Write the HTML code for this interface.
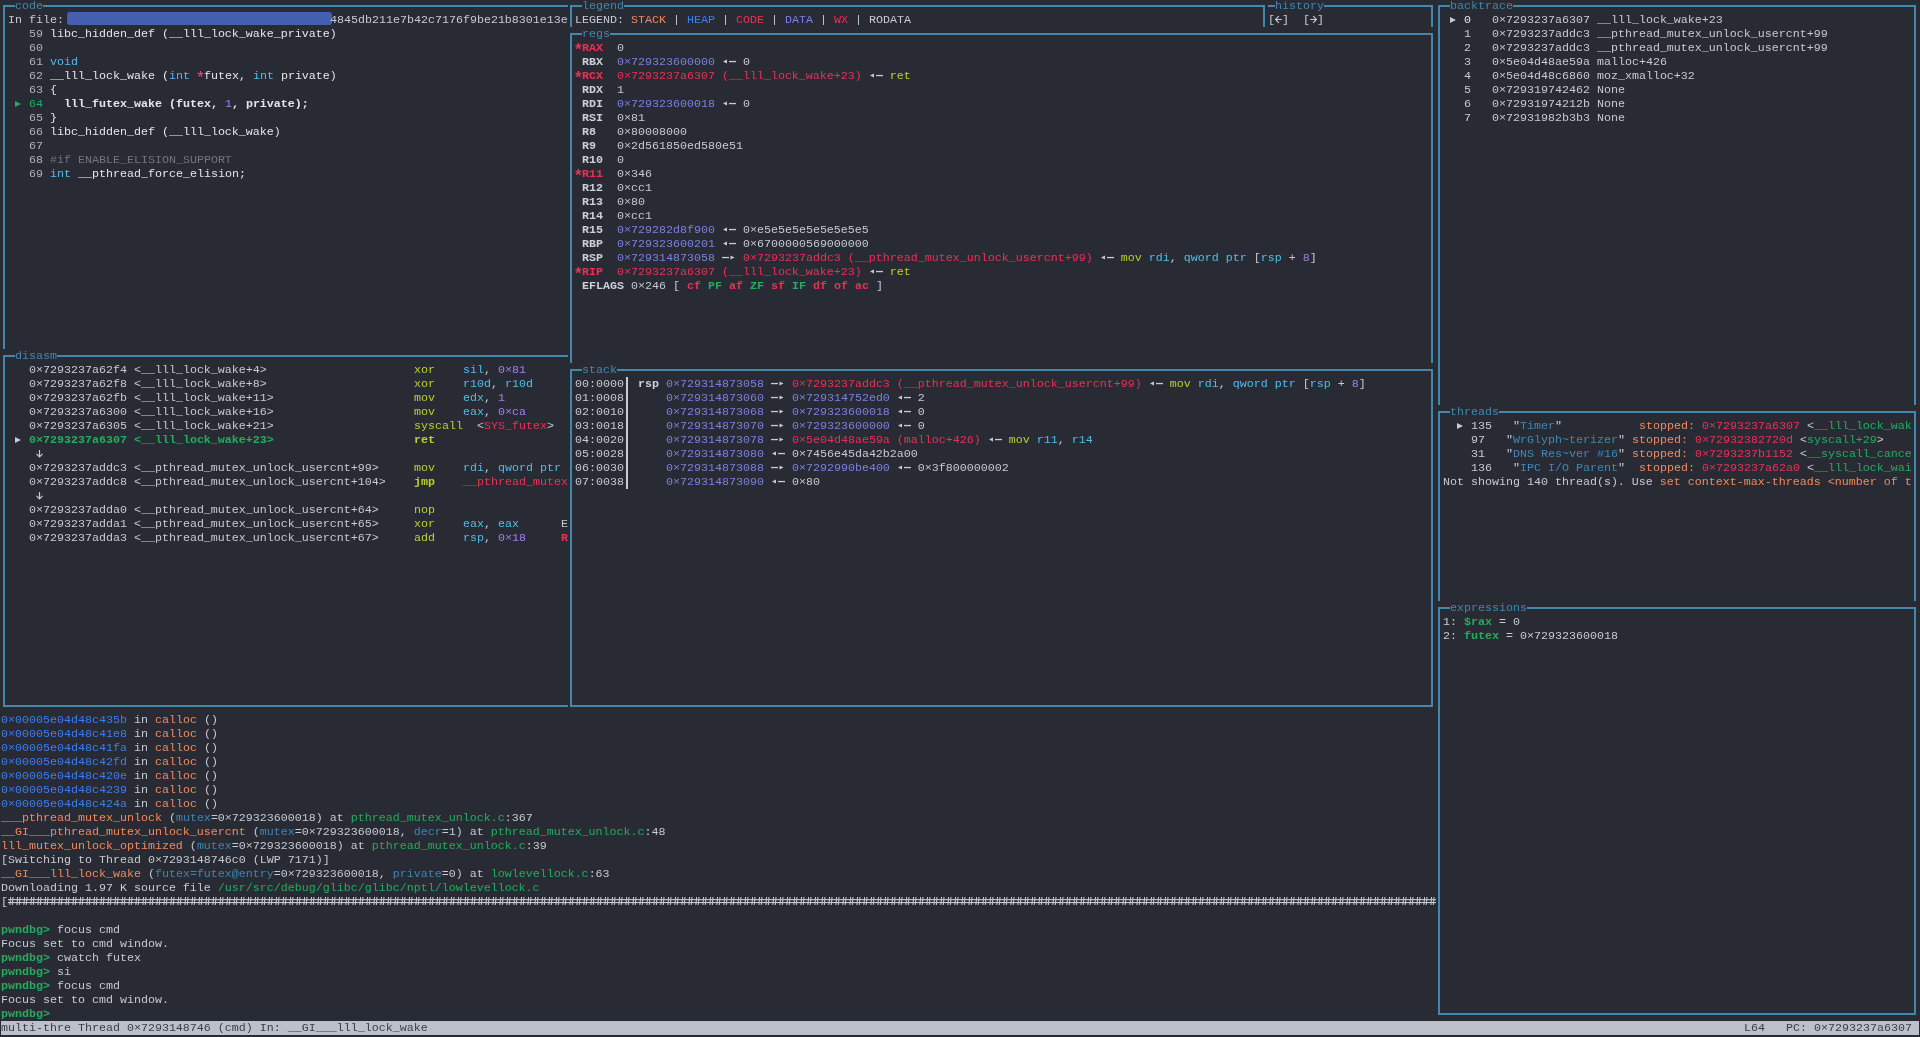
<!DOCTYPE html>
<html><head><meta charset="utf-8"><style>
html,body{margin:0;padding:0;}
body{width:1920px;height:1037px;overflow:hidden;background:#282b34;position:relative;
font-family:"Liberation Mono",monospace;font-size:11.667px;}
.l{position:absolute;height:14px;line-height:14px;white-space:pre;}
.ast{display:inline-block;transform:translateY(3px) scale(1.4);}
</style></head><body>
<div style="position:absolute;left:3px;top:5px;width:565px;height:2px;background:#4386ae;"></div>
<div style="position:absolute;left:15px;top:5px;width:28px;height:2px;background:#282b34;"></div>
<div style="position:absolute;left:3px;top:5px;width:2px;height:344px;background:#4386ae;"></div>
<div style="position:absolute;left:3px;top:355px;width:565px;height:2px;background:#4386ae;"></div>
<div style="position:absolute;left:15px;top:355px;width:42px;height:2px;background:#282b34;"></div>
<div style="position:absolute;left:3px;top:355px;width:2px;height:352px;background:#4386ae;"></div>
<div style="position:absolute;left:3px;top:705px;width:565px;height:2px;background:#4386ae;"></div>
<div style="position:absolute;left:570px;top:5px;width:695px;height:2px;background:#4386ae;"></div>
<div style="position:absolute;left:582px;top:5px;width:42px;height:2px;background:#282b34;"></div>
<div style="position:absolute;left:570px;top:5px;width:2px;height:22px;background:#4386ae;"></div>
<div style="position:absolute;left:1263px;top:5px;width:2px;height:22px;background:#4386ae;"></div>
<div style="position:absolute;left:1268px;top:5px;width:165px;height:2px;background:#4386ae;"></div>
<div style="position:absolute;left:1431px;top:5px;width:2px;height:22px;background:#4386ae;"></div>
<div style="position:absolute;left:1275px;top:5px;width:49px;height:2px;background:#282b34;"></div>
<div style="position:absolute;left:570px;top:33px;width:863px;height:2px;background:#4386ae;"></div>
<div style="position:absolute;left:582px;top:33px;width:28px;height:2px;background:#282b34;"></div>
<div style="position:absolute;left:570px;top:33px;width:2px;height:330px;background:#4386ae;"></div>
<div style="position:absolute;left:1431px;top:33px;width:2px;height:330px;background:#4386ae;"></div>
<div style="position:absolute;left:570px;top:369px;width:863px;height:2px;background:#4386ae;"></div>
<div style="position:absolute;left:582px;top:369px;width:35px;height:2px;background:#282b34;"></div>
<div style="position:absolute;left:570px;top:369px;width:2px;height:338px;background:#4386ae;"></div>
<div style="position:absolute;left:1431px;top:369px;width:2px;height:338px;background:#4386ae;"></div>
<div style="position:absolute;left:570px;top:705px;width:863px;height:2px;background:#4386ae;"></div>
<div style="position:absolute;left:1438px;top:5px;width:478px;height:2px;background:#4386ae;"></div>
<div style="position:absolute;left:1450px;top:5px;width:63px;height:2px;background:#282b34;"></div>
<div style="position:absolute;left:1438px;top:5px;width:2px;height:400px;background:#4386ae;"></div>
<div style="position:absolute;left:1914px;top:5px;width:2px;height:400px;background:#4386ae;"></div>
<div style="position:absolute;left:1438px;top:411px;width:478px;height:2px;background:#4386ae;"></div>
<div style="position:absolute;left:1450px;top:411px;width:49px;height:2px;background:#282b34;"></div>
<div style="position:absolute;left:1438px;top:411px;width:2px;height:190px;background:#4386ae;"></div>
<div style="position:absolute;left:1914px;top:411px;width:2px;height:190px;background:#4386ae;"></div>
<div style="position:absolute;left:1438px;top:607px;width:478px;height:2px;background:#4386ae;"></div>
<div style="position:absolute;left:1450px;top:607px;width:77px;height:2px;background:#282b34;"></div>
<div style="position:absolute;left:1438px;top:607px;width:2px;height:408px;background:#4386ae;"></div>
<div style="position:absolute;left:1914px;top:607px;width:2px;height:408px;background:#4386ae;"></div>
<div style="position:absolute;left:1438px;top:1013px;width:478px;height:2px;background:#4386ae;"></div>
<div style="position:absolute;left:67px;top:12px;width:265px;height:13px;background:#4560b0;border-radius:3px"></div>
<div style="position:absolute;left:626px;top:377px;width:2px;height:14px;background:#c8ccd4;"></div>
<div style="position:absolute;left:626px;top:391px;width:2px;height:14px;background:#c8ccd4;"></div>
<div style="position:absolute;left:626px;top:405px;width:2px;height:14px;background:#c8ccd4;"></div>
<div style="position:absolute;left:626px;top:419px;width:2px;height:14px;background:#c8ccd4;"></div>
<div style="position:absolute;left:626px;top:433px;width:2px;height:14px;background:#c8ccd4;"></div>
<div style="position:absolute;left:626px;top:447px;width:2px;height:14px;background:#c8ccd4;"></div>
<div style="position:absolute;left:626px;top:461px;width:2px;height:14px;background:#c8ccd4;"></div>
<div style="position:absolute;left:626px;top:475px;width:2px;height:14px;background:#c8ccd4;"></div>
<div style="position:absolute;left:1px;top:1021px;width:1918px;height:14px;background:#bac1cd;"></div>
<div style="position:absolute;left:0;top:0;width:1920px;height:1037px;will-change:transform"><div class="l" style="left:15px;top:-1px"><span style="color:#4386ae">code</span></div>
<div class="l" style="left:15px;top:349px"><span style="color:#4386ae">disasm</span></div>
<div class="l" style="left:582px;top:-1px"><span style="color:#4386ae">legend</span></div>
<div class="l" style="left:1275px;top:-1px"><span style="color:#4386ae">history</span></div>
<div class="l" style="left:582px;top:27px"><span style="color:#4386ae">regs</span></div>
<div class="l" style="left:582px;top:363px"><span style="color:#4386ae">stack</span></div>
<div class="l" style="left:1450px;top:-1px"><span style="color:#4386ae">backtrace</span></div>
<div class="l" style="left:1450px;top:405px"><span style="color:#4386ae">threads</span></div>
<div class="l" style="left:1450px;top:601px"><span style="color:#4386ae">expressions</span></div>
<div class="l" style="left:8px;top:13px"><span style="color:#c6cad2">In file: </span></div>
<div class="l" style="left:330px;top:13px"><span style="color:#c6cad2">4845db211e7b42c7176f9be21b8301e13e</span></div>
<div class="l" style="left:29px;top:27px"><span style="color:#b0b4bb">59 </span><span style="color:#e4e6ea">libc_hidden_def (__lll_lock_wake_private)</span></div>
<div class="l" style="left:29px;top:41px"><span style="color:#b0b4bb">60 </span></div>
<div class="l" style="left:29px;top:55px"><span style="color:#b0b4bb">61 </span><span style="color:#50bdea">void</span></div>
<div class="l" style="left:29px;top:69px"><span style="color:#b0b4bb">62 </span><span style="color:#e4e6ea">__lll_lock_wake (</span><span style="color:#50bdea">int</span><span style="color:#e4e6ea"> </span><span style="color:#ee4f7e"><span class="ast">*</span></span><span style="color:#e4e6ea">futex, </span><span style="color:#50bdea">int</span><span style="color:#e4e6ea"> private)</span></div>
<div class="l" style="left:29px;top:83px"><span style="color:#b0b4bb">63 </span><span style="color:#e4e6ea">{</span></div>
<div class="l" style="left:29px;top:111px"><span style="color:#b0b4bb">65 </span><span style="color:#e4e6ea">}</span></div>
<div class="l" style="left:29px;top:125px"><span style="color:#b0b4bb">66 </span><span style="color:#e4e6ea">libc_hidden_def (__lll_lock_wake)</span></div>
<div class="l" style="left:29px;top:139px"><span style="color:#b0b4bb">67 </span></div>
<div class="l" style="left:29px;top:153px"><span style="color:#b0b4bb">68 </span><span style="color:#71757e">#if ENABLE_ELISION_SUPPORT</span></div>
<div class="l" style="left:29px;top:167px"><span style="color:#b0b4bb">69 </span><span style="color:#50bdea">int</span><span style="color:#e4e6ea"> __pthread_force_elision;</span></div>
<div class="l" style="left:15px;top:97px"><span style="color:#23ad5c"> </span><span style="color:#c6cad2"> </span><span style="color:#23ad5c">64</span><span style="color:#c6cad2">   </span><span style="color:#e4e6ea;font-weight:bold">lll_futex_wake (futex, </span><span style="color:#a77df0">1</span><span style="color:#e4e6ea;font-weight:bold">, private);</span></div>
<div class="l" style="left:29px;top:363px"><span style="color:#c6cad2">0×7293237a62f4 &lt;__lll_lock_wake+4&gt;</span></div>
<div class="l" style="left:414px;top:363px"><span style="color:#bccf2c">xor</span></div>
<div class="l" style="left:463px;top:363px"><span style="color:#50bdea">sil</span><span style="color:#c6cad2">, </span><span style="color:#a77df0">0×81</span></div>
<div class="l" style="left:29px;top:377px"><span style="color:#c6cad2">0×7293237a62f8 &lt;__lll_lock_wake+8&gt;</span></div>
<div class="l" style="left:414px;top:377px"><span style="color:#bccf2c">xor</span></div>
<div class="l" style="left:463px;top:377px"><span style="color:#50bdea">r10d</span><span style="color:#c6cad2">, </span><span style="color:#50bdea">r10d</span></div>
<div class="l" style="left:29px;top:391px"><span style="color:#c6cad2">0×7293237a62fb &lt;__lll_lock_wake+11&gt;</span></div>
<div class="l" style="left:414px;top:391px"><span style="color:#bccf2c">mov</span></div>
<div class="l" style="left:463px;top:391px"><span style="color:#50bdea">edx</span><span style="color:#c6cad2">, </span><span style="color:#a77df0">1</span></div>
<div class="l" style="left:29px;top:405px"><span style="color:#c6cad2">0×7293237a6300 &lt;__lll_lock_wake+16&gt;</span></div>
<div class="l" style="left:414px;top:405px"><span style="color:#bccf2c">mov</span></div>
<div class="l" style="left:463px;top:405px"><span style="color:#50bdea">eax</span><span style="color:#c6cad2">, </span><span style="color:#a77df0">0×ca</span></div>
<div class="l" style="left:29px;top:419px"><span style="color:#c6cad2">0×7293237a6305 &lt;__lll_lock_wake+21&gt;</span></div>
<div class="l" style="left:414px;top:419px"><span style="color:#bccf2c">syscall</span></div>
<div class="l" style="left:477px;top:419px"><span style="color:#c6cad2">&lt;</span><span style="color:#ee2f55">SYS_futex</span><span style="color:#c6cad2">&gt;</span></div>
<div class="l" style="left:15px;top:433px"><span style="color:#c6cad2"> </span></div>
<div class="l" style="left:29px;top:433px"><span style="color:#23ad5c;font-weight:bold">0×7293237a6307 &lt;__lll_lock_wake+23&gt;</span></div>
<div class="l" style="left:414px;top:433px"><span style="color:#bccf2c;font-weight:bold">ret</span></div>
<div class="l" style="left:36px;top:447px"><span style="color:#c6cad2"> </span></div>
<div class="l" style="left:29px;top:461px"><span style="color:#c6cad2">0×7293237addc3 &lt;__pthread_mutex_unlock_usercnt+99&gt;</span></div>
<div class="l" style="left:414px;top:461px"><span style="color:#bccf2c">mov</span></div>
<div class="l" style="left:463px;top:461px"><span style="color:#50bdea">rdi</span><span style="color:#c6cad2">, </span><span style="color:#50bdea">qword ptr</span></div>
<div class="l" style="left:29px;top:475px"><span style="color:#c6cad2">0×7293237addc8 &lt;__pthread_mutex_unlock_usercnt+104&gt;</span></div>
<div class="l" style="left:414px;top:475px"><span style="color:#bccf2c;font-weight:bold">jmp</span></div>
<div class="l" style="left:463px;top:475px"><span style="color:#ee2f55">__pthread_mutex</span></div>
<div class="l" style="left:36px;top:489px"><span style="color:#c6cad2"> </span></div>
<div class="l" style="left:29px;top:503px"><span style="color:#c6cad2">0×7293237adda0 &lt;__pthread_mutex_unlock_usercnt+64&gt;</span></div>
<div class="l" style="left:414px;top:503px"><span style="color:#bccf2c">nop</span></div>
<div class="l" style="left:29px;top:517px"><span style="color:#c6cad2">0×7293237adda1 &lt;__pthread_mutex_unlock_usercnt+65&gt;</span></div>
<div class="l" style="left:414px;top:517px"><span style="color:#bccf2c">xor</span></div>
<div class="l" style="left:463px;top:517px"><span style="color:#50bdea">eax</span><span style="color:#c6cad2">, </span><span style="color:#50bdea">eax</span></div>
<div class="l" style="left:561px;top:517px"><span style="color:#c6cad2">E</span></div>
<div class="l" style="left:29px;top:531px"><span style="color:#c6cad2">0×7293237adda3 &lt;__pthread_mutex_unlock_usercnt+67&gt;</span></div>
<div class="l" style="left:414px;top:531px"><span style="color:#bccf2c">add</span></div>
<div class="l" style="left:463px;top:531px"><span style="color:#50bdea">rsp</span><span style="color:#c6cad2">, </span><span style="color:#a77df0">0×18</span></div>
<div class="l" style="left:561px;top:531px"><span style="color:#ee2f55;font-weight:bold">R</span></div>
<div class="l" style="left:575px;top:13px"><span style="color:#c6cad2">LEGEND: </span><span style="color:#f08a5d">STACK</span><span style="color:#c6cad2"> | </span><span style="color:#3a7ef2">HEAP</span><span style="color:#c6cad2"> | </span><span style="color:#ee2f55">CODE</span><span style="color:#c6cad2"> | </span><span style="color:#7c80e0">DATA</span><span style="color:#c6cad2"> | </span><span style="color:#ee2f55">WX</span><span style="color:#c6cad2"> | </span><span style="color:#c6cad2">RODATA</span></div>
<div class="l" style="left:1268px;top:13px"><span style="color:#c6cad2">[ ]  [ ]</span></div>
<div class="l" style="left:575px;top:41px"><span style="color:#ee2f55;font-weight:bold"><span class="ast">*</span>RAX</span></div>
<div class="l" style="left:617px;top:41px"><span style="color:#c6cad2">0</span></div>
<div class="l" style="left:582px;top:55px"><span style="color:#ccd0d8;font-weight:bold">RBX</span></div>
<div class="l" style="left:617px;top:55px"><span style="color:#7c80e0">0×729323600000</span><span style="color:#c6cad2"> </span><span style="color:#c6cad2">  </span><span style="color:#c6cad2"> 0</span></div>
<div class="l" style="left:575px;top:69px"><span style="color:#ee2f55;font-weight:bold"><span class="ast">*</span>RCX</span></div>
<div class="l" style="left:617px;top:69px"><span style="color:#ee2f55">0×7293237a6307 (__lll_lock_wake+23)</span><span style="color:#c6cad2"> </span><span style="color:#c6cad2">  </span><span style="color:#c6cad2"> </span><span style="color:#bccf2c">ret</span></div>
<div class="l" style="left:582px;top:83px"><span style="color:#ccd0d8;font-weight:bold">RDX</span></div>
<div class="l" style="left:617px;top:83px"><span style="color:#c6cad2">1</span></div>
<div class="l" style="left:582px;top:97px"><span style="color:#ccd0d8;font-weight:bold">RDI</span></div>
<div class="l" style="left:617px;top:97px"><span style="color:#7c80e0">0×729323600018</span><span style="color:#c6cad2"> </span><span style="color:#c6cad2">  </span><span style="color:#c6cad2"> 0</span></div>
<div class="l" style="left:582px;top:111px"><span style="color:#ccd0d8;font-weight:bold">RSI</span></div>
<div class="l" style="left:617px;top:111px"><span style="color:#c6cad2">0×81</span></div>
<div class="l" style="left:582px;top:125px"><span style="color:#ccd0d8;font-weight:bold">R8</span></div>
<div class="l" style="left:617px;top:125px"><span style="color:#c6cad2">0×80008000</span></div>
<div class="l" style="left:582px;top:139px"><span style="color:#ccd0d8;font-weight:bold">R9</span></div>
<div class="l" style="left:617px;top:139px"><span style="color:#c6cad2">0×2d561850ed580e51</span></div>
<div class="l" style="left:582px;top:153px"><span style="color:#ccd0d8;font-weight:bold">R10</span></div>
<div class="l" style="left:617px;top:153px"><span style="color:#c6cad2">0</span></div>
<div class="l" style="left:575px;top:167px"><span style="color:#ee2f55;font-weight:bold"><span class="ast">*</span>R11</span></div>
<div class="l" style="left:617px;top:167px"><span style="color:#c6cad2">0×346</span></div>
<div class="l" style="left:582px;top:181px"><span style="color:#ccd0d8;font-weight:bold">R12</span></div>
<div class="l" style="left:617px;top:181px"><span style="color:#c6cad2">0×cc1</span></div>
<div class="l" style="left:582px;top:195px"><span style="color:#ccd0d8;font-weight:bold">R13</span></div>
<div class="l" style="left:617px;top:195px"><span style="color:#c6cad2">0×80</span></div>
<div class="l" style="left:582px;top:209px"><span style="color:#ccd0d8;font-weight:bold">R14</span></div>
<div class="l" style="left:617px;top:209px"><span style="color:#c6cad2">0×cc1</span></div>
<div class="l" style="left:582px;top:223px"><span style="color:#ccd0d8;font-weight:bold">R15</span></div>
<div class="l" style="left:617px;top:223px"><span style="color:#7c80e0">0×729282d8f900</span><span style="color:#c6cad2"> </span><span style="color:#c6cad2">  </span><span style="color:#c6cad2"> 0×e5e5e5e5e5e5e5e5</span></div>
<div class="l" style="left:582px;top:237px"><span style="color:#ccd0d8;font-weight:bold">RBP</span></div>
<div class="l" style="left:617px;top:237px"><span style="color:#7c80e0">0×729323600201</span><span style="color:#c6cad2"> </span><span style="color:#c6cad2">  </span><span style="color:#c6cad2"> 0×6700000569000000</span></div>
<div class="l" style="left:582px;top:251px"><span style="color:#ccd0d8;font-weight:bold">RSP</span></div>
<div class="l" style="left:617px;top:251px"><span style="color:#7c80e0">0×729314873058</span><span style="color:#c6cad2"> </span><span style="color:#c6cad2">  </span><span style="color:#c6cad2"> </span><span style="color:#ee2f55">0×7293237addc3 (__pthread_mutex_unlock_usercnt+99)</span><span style="color:#c6cad2"> </span><span style="color:#c6cad2">  </span><span style="color:#c6cad2"> </span><span style="color:#bccf2c">mov</span><span style="color:#c6cad2"> </span><span style="color:#50bdea">rdi</span><span style="color:#c6cad2">, </span><span style="color:#50bdea">qword ptr</span><span style="color:#c6cad2"> [</span><span style="color:#50bdea">rsp</span><span style="color:#c6cad2"> + </span><span style="color:#a77df0">8</span><span style="color:#c6cad2">]</span></div>
<div class="l" style="left:575px;top:265px"><span style="color:#ee2f55;font-weight:bold"><span class="ast">*</span>RIP</span></div>
<div class="l" style="left:617px;top:265px"><span style="color:#ee2f55">0×7293237a6307 (__lll_lock_wake+23)</span><span style="color:#c6cad2"> </span><span style="color:#c6cad2">  </span><span style="color:#c6cad2"> </span><span style="color:#bccf2c">ret</span></div>
<div class="l" style="left:582px;top:279px"><span style="color:#ccd0d8;font-weight:bold">EFLAGS</span><span style="color:#c6cad2"> 0×246 [ </span><span style="color:#ee2f55;font-weight:bold">cf</span><span style="color:#c6cad2"> </span><span style="color:#23ad5c;font-weight:bold">PF</span><span style="color:#c6cad2"> </span><span style="color:#ee2f55;font-weight:bold">af</span><span style="color:#c6cad2"> </span><span style="color:#23ad5c;font-weight:bold">ZF</span><span style="color:#c6cad2"> </span><span style="color:#ee2f55;font-weight:bold">sf</span><span style="color:#c6cad2"> </span><span style="color:#23ad5c;font-weight:bold">IF</span><span style="color:#c6cad2"> </span><span style="color:#ee2f55;font-weight:bold">df</span><span style="color:#c6cad2"> </span><span style="color:#ee2f55;font-weight:bold">of</span><span style="color:#c6cad2"> </span><span style="color:#ee2f55;font-weight:bold">ac</span><span style="color:#c6cad2"> ]</span></div>
<div class="l" style="left:575px;top:377px"><span style="color:#c6cad2">00:0000</span></div>
<div class="l" style="left:638px;top:377px"><span style="color:#ccd0d8;font-weight:bold">rsp</span></div>
<div class="l" style="left:666px;top:377px"><span style="color:#7c80e0">0×729314873058</span><span style="color:#c6cad2"> </span><span style="color:#c6cad2">  </span><span style="color:#c6cad2"> </span><span style="color:#ee2f55">0×7293237addc3 (__pthread_mutex_unlock_usercnt+99)</span><span style="color:#c6cad2"> </span><span style="color:#c6cad2">  </span><span style="color:#c6cad2"> </span><span style="color:#bccf2c">mov</span><span style="color:#c6cad2"> </span><span style="color:#50bdea">rdi</span><span style="color:#c6cad2">, </span><span style="color:#50bdea">qword ptr</span><span style="color:#c6cad2"> [</span><span style="color:#50bdea">rsp</span><span style="color:#c6cad2"> + </span><span style="color:#a77df0">8</span><span style="color:#c6cad2">]</span></div>
<div class="l" style="left:575px;top:391px"><span style="color:#c6cad2">01:0008</span></div>
<div class="l" style="left:666px;top:391px"><span style="color:#7c80e0">0×729314873060</span><span style="color:#c6cad2"> </span><span style="color:#c6cad2">  </span><span style="color:#c6cad2"> </span><span style="color:#7c80e0">0×729314752ed0</span><span style="color:#c6cad2"> </span><span style="color:#c6cad2">  </span><span style="color:#c6cad2"> 2</span></div>
<div class="l" style="left:575px;top:405px"><span style="color:#c6cad2">02:0010</span></div>
<div class="l" style="left:666px;top:405px"><span style="color:#7c80e0">0×729314873068</span><span style="color:#c6cad2"> </span><span style="color:#c6cad2">  </span><span style="color:#c6cad2"> </span><span style="color:#7c80e0">0×729323600018</span><span style="color:#c6cad2"> </span><span style="color:#c6cad2">  </span><span style="color:#c6cad2"> 0</span></div>
<div class="l" style="left:575px;top:419px"><span style="color:#c6cad2">03:0018</span></div>
<div class="l" style="left:666px;top:419px"><span style="color:#7c80e0">0×729314873070</span><span style="color:#c6cad2"> </span><span style="color:#c6cad2">  </span><span style="color:#c6cad2"> </span><span style="color:#7c80e0">0×729323600000</span><span style="color:#c6cad2"> </span><span style="color:#c6cad2">  </span><span style="color:#c6cad2"> 0</span></div>
<div class="l" style="left:575px;top:433px"><span style="color:#c6cad2">04:0020</span></div>
<div class="l" style="left:666px;top:433px"><span style="color:#7c80e0">0×729314873078</span><span style="color:#c6cad2"> </span><span style="color:#c6cad2">  </span><span style="color:#c6cad2"> </span><span style="color:#ee2f55">0×5e04d48ae59a (malloc+426)</span><span style="color:#c6cad2"> </span><span style="color:#c6cad2">  </span><span style="color:#c6cad2"> </span><span style="color:#bccf2c">mov</span><span style="color:#c6cad2"> </span><span style="color:#50bdea">r11</span><span style="color:#c6cad2">, </span><span style="color:#50bdea">r14</span></div>
<div class="l" style="left:575px;top:447px"><span style="color:#c6cad2">05:0028</span></div>
<div class="l" style="left:666px;top:447px"><span style="color:#7c80e0">0×729314873080</span><span style="color:#c6cad2"> </span><span style="color:#c6cad2">  </span><span style="color:#c6cad2"> 0×7456e45da42b2a00</span></div>
<div class="l" style="left:575px;top:461px"><span style="color:#c6cad2">06:0030</span></div>
<div class="l" style="left:666px;top:461px"><span style="color:#7c80e0">0×729314873088</span><span style="color:#c6cad2"> </span><span style="color:#c6cad2">  </span><span style="color:#c6cad2"> </span><span style="color:#7c80e0">0×7292990be400</span><span style="color:#c6cad2"> </span><span style="color:#c6cad2">  </span><span style="color:#c6cad2"> 0×3f800000002</span></div>
<div class="l" style="left:575px;top:475px"><span style="color:#c6cad2">07:0038</span></div>
<div class="l" style="left:666px;top:475px"><span style="color:#7c80e0">0×729314873090</span><span style="color:#c6cad2"> </span><span style="color:#c6cad2">  </span><span style="color:#c6cad2"> 0×80</span></div>
<div class="l" style="left:1450px;top:13px"><span style="color:#c6cad2"> </span></div>
<div class="l" style="left:1464px;top:13px"><span style="color:#e4e6ea">0</span></div>
<div class="l" style="left:1492px;top:13px"><span style="color:#c6cad2">0×7293237a6307 __lll_lock_wake+23</span></div>
<div class="l" style="left:1464px;top:27px"><span style="color:#c6cad2">1</span></div>
<div class="l" style="left:1492px;top:27px"><span style="color:#c6cad2">0×7293237addc3 __pthread_mutex_unlock_usercnt+99</span></div>
<div class="l" style="left:1464px;top:41px"><span style="color:#c6cad2">2</span></div>
<div class="l" style="left:1492px;top:41px"><span style="color:#c6cad2">0×7293237addc3 __pthread_mutex_unlock_usercnt+99</span></div>
<div class="l" style="left:1464px;top:55px"><span style="color:#c6cad2">3</span></div>
<div class="l" style="left:1492px;top:55px"><span style="color:#c6cad2">0×5e04d48ae59a malloc+426</span></div>
<div class="l" style="left:1464px;top:69px"><span style="color:#c6cad2">4</span></div>
<div class="l" style="left:1492px;top:69px"><span style="color:#c6cad2">0×5e04d48c6860 moz_xmalloc+32</span></div>
<div class="l" style="left:1464px;top:83px"><span style="color:#c6cad2">5</span></div>
<div class="l" style="left:1492px;top:83px"><span style="color:#c6cad2">0×729319742462 None</span></div>
<div class="l" style="left:1464px;top:97px"><span style="color:#c6cad2">6</span></div>
<div class="l" style="left:1492px;top:97px"><span style="color:#c6cad2">0×72931974212b None</span></div>
<div class="l" style="left:1464px;top:111px"><span style="color:#c6cad2">7</span></div>
<div class="l" style="left:1492px;top:111px"><span style="color:#c6cad2">0×72931982b3b3 None</span></div>
<div class="l" style="left:1457px;top:419px"><span style="color:#c6cad2"> </span></div>
<div class="l" style="left:1471px;top:419px"><span style="color:#c6cad2">135</span></div>
<div class="l" style="left:1513px;top:419px"><span style="color:#c6cad2">&quot;</span><span style="color:#3f88b8">Timer</span><span style="color:#c6cad2">&quot;</span></div>
<div class="l" style="left:1639px;top:419px"><span style="color:#f08a5d">stopped:</span><span style="color:#c6cad2"> </span><span style="color:#ee2f55">0×7293237a6307</span><span style="color:#c6cad2"> </span><span style="color:#c6cad2">&lt;</span><span style="color:#23ad5c">__lll_lock_wak</span></div>
<div class="l" style="left:1471px;top:433px"><span style="color:#c6cad2">97</span></div>
<div class="l" style="left:1506px;top:433px"><span style="color:#c6cad2">&quot;</span><span style="color:#3f88b8">WrGlyph~terizer</span><span style="color:#c6cad2">&quot;</span></div>
<div class="l" style="left:1632px;top:433px"><span style="color:#f08a5d">stopped:</span><span style="color:#c6cad2"> </span><span style="color:#ee2f55">0×72932382720d</span><span style="color:#c6cad2"> </span><span style="color:#c6cad2">&lt;</span><span style="color:#23ad5c">syscall+29</span><span style="color:#c6cad2">&gt;</span></div>
<div class="l" style="left:1471px;top:447px"><span style="color:#c6cad2">31</span></div>
<div class="l" style="left:1506px;top:447px"><span style="color:#c6cad2">&quot;</span><span style="color:#3f88b8">DNS Res~ver #16</span><span style="color:#c6cad2">&quot;</span></div>
<div class="l" style="left:1632px;top:447px"><span style="color:#f08a5d">stopped:</span><span style="color:#c6cad2"> </span><span style="color:#ee2f55">0×7293237b1152</span><span style="color:#c6cad2"> </span><span style="color:#c6cad2">&lt;</span><span style="color:#23ad5c">__syscall_cance</span></div>
<div class="l" style="left:1471px;top:461px"><span style="color:#c6cad2">136</span></div>
<div class="l" style="left:1513px;top:461px"><span style="color:#c6cad2">&quot;</span><span style="color:#3f88b8">IPC I/O Parent</span><span style="color:#c6cad2">&quot;</span></div>
<div class="l" style="left:1639px;top:461px"><span style="color:#f08a5d">stopped:</span><span style="color:#c6cad2"> </span><span style="color:#ee2f55">0×7293237a62a0</span><span style="color:#c6cad2"> </span><span style="color:#c6cad2">&lt;</span><span style="color:#23ad5c">__lll_lock_wai</span></div>
<div class="l" style="left:1443px;top:475px"><span style="color:#c6cad2">Not showing 140 thread(s). Use </span><span style="color:#f08a5d">set context-max-threads &lt;number of t</span></div>
<div class="l" style="left:1443px;top:615px"><span style="color:#c6cad2">1:</span></div>
<div class="l" style="left:1464px;top:615px"><span style="color:#23ad5c;font-weight:bold">$rax</span><span style="color:#c6cad2"> = 0</span></div>
<div class="l" style="left:1443px;top:629px"><span style="color:#c6cad2">2:</span></div>
<div class="l" style="left:1464px;top:629px"><span style="color:#23ad5c;font-weight:bold">futex</span><span style="color:#c6cad2"> = 0×729323600018</span></div>
<div class="l" style="left:1px;top:713px"><span style="color:#3a7ef2">0×00005e04d48c435b</span><span style="color:#c6cad2"> in </span><span style="color:#f08a5d">calloc</span><span style="color:#c6cad2"> ()</span></div>
<div class="l" style="left:1px;top:727px"><span style="color:#3a7ef2">0×00005e04d48c41e8</span><span style="color:#c6cad2"> in </span><span style="color:#f08a5d">calloc</span><span style="color:#c6cad2"> ()</span></div>
<div class="l" style="left:1px;top:741px"><span style="color:#3a7ef2">0×00005e04d48c41fa</span><span style="color:#c6cad2"> in </span><span style="color:#f08a5d">calloc</span><span style="color:#c6cad2"> ()</span></div>
<div class="l" style="left:1px;top:755px"><span style="color:#3a7ef2">0×00005e04d48c42fd</span><span style="color:#c6cad2"> in </span><span style="color:#f08a5d">calloc</span><span style="color:#c6cad2"> ()</span></div>
<div class="l" style="left:1px;top:769px"><span style="color:#3a7ef2">0×00005e04d48c420e</span><span style="color:#c6cad2"> in </span><span style="color:#f08a5d">calloc</span><span style="color:#c6cad2"> ()</span></div>
<div class="l" style="left:1px;top:783px"><span style="color:#3a7ef2">0×00005e04d48c4239</span><span style="color:#c6cad2"> in </span><span style="color:#f08a5d">calloc</span><span style="color:#c6cad2"> ()</span></div>
<div class="l" style="left:1px;top:797px"><span style="color:#3a7ef2">0×00005e04d48c424a</span><span style="color:#c6cad2"> in </span><span style="color:#f08a5d">calloc</span><span style="color:#c6cad2"> ()</span></div>
<div class="l" style="left:1px;top:811px"><span style="color:#f08a5d">___pthread_mutex_unlock</span><span style="color:#c6cad2"> (</span><span style="color:#3d84b8">mutex</span><span style="color:#c6cad2">=0×729323600018) at </span><span style="color:#23ad5c">pthread_mutex_unlock.c</span><span style="color:#c6cad2">:367</span></div>
<div class="l" style="left:1px;top:825px"><span style="color:#f08a5d">__GI___pthread_mutex_unlock_usercnt</span><span style="color:#c6cad2"> (</span><span style="color:#3d84b8">mutex</span><span style="color:#c6cad2">=0×729323600018, </span><span style="color:#3d84b8">decr</span><span style="color:#c6cad2">=1) at </span><span style="color:#23ad5c">pthread_mutex_unlock.c</span><span style="color:#c6cad2">:48</span></div>
<div class="l" style="left:1px;top:839px"><span style="color:#f08a5d">lll_mutex_unlock_optimized</span><span style="color:#c6cad2"> (</span><span style="color:#3d84b8">mutex</span><span style="color:#c6cad2">=0×729323600018) at </span><span style="color:#23ad5c">pthread_mutex_unlock.c</span><span style="color:#c6cad2">:39</span></div>
<div class="l" style="left:1px;top:853px"><span style="color:#c6cad2">[Switching to Thread 0×7293148746c0 (LWP 7171)]</span></div>
<div class="l" style="left:1px;top:867px"><span style="color:#f08a5d">__GI___lll_lock_wake</span><span style="color:#c6cad2"> (</span><span style="color:#3d84b8">futex=futex@entry</span><span style="color:#c6cad2">=0×729323600018, </span><span style="color:#3d84b8">private</span><span style="color:#c6cad2">=0) at </span><span style="color:#23ad5c">lowlevellock.c</span><span style="color:#c6cad2">:63</span></div>
<div class="l" style="left:1px;top:881px"><span style="color:#c6cad2">Downloading 1.97 K source file </span><span style="color:#23ad5c">/usr/src/debug/glibc/glibc/nptl/lowlevellock.c</span></div>
<div class="l" style="left:1px;top:895px"><span style="color:#c6cad2">[</span></div>
<div class="l" style="left:1px;top:923px"><span style="color:#23ad5c;font-weight:bold">pwndbg&gt;</span><span style="color:#c6cad2"> focus cmd</span></div>
<div class="l" style="left:1px;top:937px"><span style="color:#c6cad2">Focus set to cmd window.</span></div>
<div class="l" style="left:1px;top:951px"><span style="color:#23ad5c;font-weight:bold">pwndbg&gt;</span><span style="color:#c6cad2"> cwatch futex</span></div>
<div class="l" style="left:1px;top:965px"><span style="color:#23ad5c;font-weight:bold">pwndbg&gt;</span><span style="color:#c6cad2"> si</span></div>
<div class="l" style="left:1px;top:979px"><span style="color:#23ad5c;font-weight:bold">pwndbg&gt;</span><span style="color:#c6cad2"> focus cmd</span></div>
<div class="l" style="left:1px;top:993px"><span style="color:#c6cad2">Focus set to cmd window.</span></div>
<div class="l" style="left:1px;top:1007px"><span style="color:#23ad5c;font-weight:bold">pwndbg&gt;</span></div>
<div class="l" style="left:1px;top:1021px"><span style="color:#393d46">multi-thre Thread 0×7293148746 (cmd) In: __GI___lll_lock_wake</span></div>
<div class="l" style="left:1744px;top:1021px"><span style="color:#393d46">L64</span></div>
<div class="l" style="left:1786px;top:1021px"><span style="color:#393d46">PC: 0×7293237a6307</span></div>
<svg style="position:absolute;left:0;top:0" width="1920" height="1037"><polygon points="15,101 21,104 15,107" fill="#23ad5c"/><polygon points="15,437 21,440 15,443" fill="#c6cad2"/><path d="M39.5 450V457.3 M36.5 453.8L39.5 456.8L42.5 453.8" stroke="#c6cad2" stroke-width="1.2" fill="none"/><path d="M39.5 492V499.3 M36.5 495.8L39.5 498.8L42.5 495.8" stroke="#c6cad2" stroke-width="1.2" fill="none"/><path d="M1275.5 19.5H1281.8 M1278.8 16.2L1275.6 19.5L1278.8 22.8" stroke="#c6cad2" stroke-width="1.2" fill="none"/><path d="M1310.2 19.5H1316.5 M1313.2 16.2L1316.4 19.5L1313.2 22.8" stroke="#c6cad2" stroke-width="1.2" fill="none"/><polygon points="723,61.5 727,59.5 727,63.5" fill="#c6cad2"/><rect x="729" y="60.9" width="7" height="1.3" fill="#c6cad2"/><polygon points="870,75.5 874,73.5 874,77.5" fill="#c6cad2"/><rect x="876" y="74.9" width="7" height="1.3" fill="#c6cad2"/><polygon points="723,103.5 727,101.5 727,105.5" fill="#c6cad2"/><rect x="729" y="102.9" width="7" height="1.3" fill="#c6cad2"/><polygon points="723,229.5 727,227.5 727,231.5" fill="#c6cad2"/><rect x="729" y="228.9" width="7" height="1.3" fill="#c6cad2"/><polygon points="723,243.5 727,241.5 727,245.5" fill="#c6cad2"/><rect x="729" y="242.9" width="7" height="1.3" fill="#c6cad2"/><rect x="722" y="256.9" width="7" height="1.3" fill="#c6cad2"/><polygon points="730.5,255.5 734.5,257.5 730.5,259.5" fill="#c6cad2"/><polygon points="1101,257.5 1105,255.5 1105,259.5" fill="#c6cad2"/><rect x="1107" y="256.9" width="7" height="1.3" fill="#c6cad2"/><polygon points="870,271.5 874,269.5 874,273.5" fill="#c6cad2"/><rect x="876" y="270.9" width="7" height="1.3" fill="#c6cad2"/><rect x="771" y="382.9" width="7" height="1.3" fill="#c6cad2"/><polygon points="779.5,381.5 783.5,383.5 779.5,385.5" fill="#c6cad2"/><polygon points="1150,383.5 1154,381.5 1154,385.5" fill="#c6cad2"/><rect x="1156" y="382.9" width="7" height="1.3" fill="#c6cad2"/><rect x="771" y="396.9" width="7" height="1.3" fill="#c6cad2"/><polygon points="779.5,395.5 783.5,397.5 779.5,399.5" fill="#c6cad2"/><polygon points="898,397.5 902,395.5 902,399.5" fill="#c6cad2"/><rect x="904" y="396.9" width="7" height="1.3" fill="#c6cad2"/><rect x="771" y="410.9" width="7" height="1.3" fill="#c6cad2"/><polygon points="779.5,409.5 783.5,411.5 779.5,413.5" fill="#c6cad2"/><polygon points="898,411.5 902,409.5 902,413.5" fill="#c6cad2"/><rect x="904" y="410.9" width="7" height="1.3" fill="#c6cad2"/><rect x="771" y="424.9" width="7" height="1.3" fill="#c6cad2"/><polygon points="779.5,423.5 783.5,425.5 779.5,427.5" fill="#c6cad2"/><polygon points="898,425.5 902,423.5 902,427.5" fill="#c6cad2"/><rect x="904" y="424.9" width="7" height="1.3" fill="#c6cad2"/><rect x="771" y="438.9" width="7" height="1.3" fill="#c6cad2"/><polygon points="779.5,437.5 783.5,439.5 779.5,441.5" fill="#c6cad2"/><polygon points="989,439.5 993,437.5 993,441.5" fill="#c6cad2"/><rect x="995" y="438.9" width="7" height="1.3" fill="#c6cad2"/><polygon points="772,453.5 776,451.5 776,455.5" fill="#c6cad2"/><rect x="778" y="452.9" width="7" height="1.3" fill="#c6cad2"/><rect x="771" y="466.9" width="7" height="1.3" fill="#c6cad2"/><polygon points="779.5,465.5 783.5,467.5 779.5,469.5" fill="#c6cad2"/><polygon points="898,467.5 902,465.5 902,469.5" fill="#c6cad2"/><rect x="904" y="466.9" width="7" height="1.3" fill="#c6cad2"/><polygon points="772,481.5 776,479.5 776,483.5" fill="#c6cad2"/><rect x="778" y="480.9" width="7" height="1.3" fill="#c6cad2"/><polygon points="1450,17 1456,20 1450,23" fill="#c6cad2"/><polygon points="1457,423 1463,426 1457,429" fill="#c6cad2"/><path d="M10.6 897L9.9 905M13 897L12.3 905M17.6 897L16.9 905M20 897L19.3 905M24.6 897L23.9 905M27 897L26.3 905M31.6 897L30.9 905M34 897L33.3 905M38.6 897L37.9 905M41 897L40.3 905M45.6 897L44.9 905M48 897L47.3 905M52.6 897L51.9 905M55 897L54.3 905M59.6 897L58.9 905M62 897L61.3 905M66.6 897L65.9 905M69 897L68.3 905M73.6 897L72.9 905M76 897L75.3 905M80.6 897L79.9 905M83 897L82.3 905M87.6 897L86.9 905M90 897L89.3 905M94.6 897L93.9 905M97 897L96.3 905M101.6 897L100.9 905M104 897L103.3 905M108.6 897L107.9 905M111 897L110.3 905M115.6 897L114.9 905M118 897L117.3 905M122.6 897L121.9 905M125 897L124.3 905M129.6 897L128.9 905M132 897L131.3 905M136.6 897L135.9 905M139 897L138.3 905M143.6 897L142.9 905M146 897L145.3 905M150.6 897L149.9 905M153 897L152.3 905M157.6 897L156.9 905M160 897L159.3 905M164.6 897L163.9 905M167 897L166.3 905M171.6 897L170.9 905M174 897L173.3 905M178.6 897L177.9 905M181 897L180.3 905M185.6 897L184.9 905M188 897L187.3 905M192.6 897L191.9 905M195 897L194.3 905M199.6 897L198.9 905M202 897L201.3 905M206.6 897L205.9 905M209 897L208.3 905M213.6 897L212.9 905M216 897L215.3 905M220.6 897L219.9 905M223 897L222.3 905M227.6 897L226.9 905M230 897L229.3 905M234.6 897L233.9 905M237 897L236.3 905M241.6 897L240.9 905M244 897L243.3 905M248.6 897L247.9 905M251 897L250.3 905M255.6 897L254.9 905M258 897L257.3 905M262.6 897L261.9 905M265 897L264.3 905M269.6 897L268.9 905M272 897L271.3 905M276.6 897L275.9 905M279 897L278.3 905M283.6 897L282.9 905M286 897L285.3 905M290.6 897L289.9 905M293 897L292.3 905M297.6 897L296.9 905M300 897L299.3 905M304.6 897L303.9 905M307 897L306.3 905M311.6 897L310.9 905M314 897L313.3 905M318.6 897L317.9 905M321 897L320.3 905M325.6 897L324.9 905M328 897L327.3 905M332.6 897L331.9 905M335 897L334.3 905M339.6 897L338.9 905M342 897L341.3 905M346.6 897L345.9 905M349 897L348.3 905M353.6 897L352.9 905M356 897L355.3 905M360.6 897L359.9 905M363 897L362.3 905M367.6 897L366.9 905M370 897L369.3 905M374.6 897L373.9 905M377 897L376.3 905M381.6 897L380.9 905M384 897L383.3 905M388.6 897L387.9 905M391 897L390.3 905M395.6 897L394.9 905M398 897L397.3 905M402.6 897L401.9 905M405 897L404.3 905M409.6 897L408.9 905M412 897L411.3 905M416.6 897L415.9 905M419 897L418.3 905M423.6 897L422.9 905M426 897L425.3 905M430.6 897L429.9 905M433 897L432.3 905M437.6 897L436.9 905M440 897L439.3 905M444.6 897L443.9 905M447 897L446.3 905M451.6 897L450.9 905M454 897L453.3 905M458.6 897L457.9 905M461 897L460.3 905M465.6 897L464.9 905M468 897L467.3 905M472.6 897L471.9 905M475 897L474.3 905M479.6 897L478.9 905M482 897L481.3 905M486.6 897L485.9 905M489 897L488.3 905M493.6 897L492.9 905M496 897L495.3 905M500.6 897L499.9 905M503 897L502.3 905M507.6 897L506.9 905M510 897L509.3 905M514.6 897L513.9 905M517 897L516.3 905M521.6 897L520.9 905M524 897L523.3 905M528.6 897L527.9 905M531 897L530.3 905M535.6 897L534.9 905M538 897L537.3 905M542.6 897L541.9 905M545 897L544.3 905M549.6 897L548.9 905M552 897L551.3 905M556.6 897L555.9 905M559 897L558.3 905M563.6 897L562.9 905M566 897L565.3 905M570.6 897L569.9 905M573 897L572.3 905M577.6 897L576.9 905M580 897L579.3 905M584.6 897L583.9 905M587 897L586.3 905M591.6 897L590.9 905M594 897L593.3 905M598.6 897L597.9 905M601 897L600.3 905M605.6 897L604.9 905M608 897L607.3 905M612.6 897L611.9 905M615 897L614.3 905M619.6 897L618.9 905M622 897L621.3 905M626.6 897L625.9 905M629 897L628.3 905M633.6 897L632.9 905M636 897L635.3 905M640.6 897L639.9 905M643 897L642.3 905M647.6 897L646.9 905M650 897L649.3 905M654.6 897L653.9 905M657 897L656.3 905M661.6 897L660.9 905M664 897L663.3 905M668.6 897L667.9 905M671 897L670.3 905M675.6 897L674.9 905M678 897L677.3 905M682.6 897L681.9 905M685 897L684.3 905M689.6 897L688.9 905M692 897L691.3 905M696.6 897L695.9 905M699 897L698.3 905M703.6 897L702.9 905M706 897L705.3 905M710.6 897L709.9 905M713 897L712.3 905M717.6 897L716.9 905M720 897L719.3 905M724.6 897L723.9 905M727 897L726.3 905M731.6 897L730.9 905M734 897L733.3 905M738.6 897L737.9 905M741 897L740.3 905M745.6 897L744.9 905M748 897L747.3 905M752.6 897L751.9 905M755 897L754.3 905M759.6 897L758.9 905M762 897L761.3 905M766.6 897L765.9 905M769 897L768.3 905M773.6 897L772.9 905M776 897L775.3 905M780.6 897L779.9 905M783 897L782.3 905M787.6 897L786.9 905M790 897L789.3 905M794.6 897L793.9 905M797 897L796.3 905M801.6 897L800.9 905M804 897L803.3 905M808.6 897L807.9 905M811 897L810.3 905M815.6 897L814.9 905M818 897L817.3 905M822.6 897L821.9 905M825 897L824.3 905M829.6 897L828.9 905M832 897L831.3 905M836.6 897L835.9 905M839 897L838.3 905M843.6 897L842.9 905M846 897L845.3 905M850.6 897L849.9 905M853 897L852.3 905M857.6 897L856.9 905M860 897L859.3 905M864.6 897L863.9 905M867 897L866.3 905M871.6 897L870.9 905M874 897L873.3 905M878.6 897L877.9 905M881 897L880.3 905M885.6 897L884.9 905M888 897L887.3 905M892.6 897L891.9 905M895 897L894.3 905M899.6 897L898.9 905M902 897L901.3 905M906.6 897L905.9 905M909 897L908.3 905M913.6 897L912.9 905M916 897L915.3 905M920.6 897L919.9 905M923 897L922.3 905M927.6 897L926.9 905M930 897L929.3 905M934.6 897L933.9 905M937 897L936.3 905M941.6 897L940.9 905M944 897L943.3 905M948.6 897L947.9 905M951 897L950.3 905M955.6 897L954.9 905M958 897L957.3 905M962.6 897L961.9 905M965 897L964.3 905M969.6 897L968.9 905M972 897L971.3 905M976.6 897L975.9 905M979 897L978.3 905M983.6 897L982.9 905M986 897L985.3 905M990.6 897L989.9 905M993 897L992.3 905M997.6 897L996.9 905M1000 897L999.3 905M1004.6 897L1003.9 905M1007 897L1006.3 905M1011.6 897L1010.9 905M1014 897L1013.3 905M1018.6 897L1017.9 905M1021 897L1020.3 905M1025.6 897L1024.9 905M1028 897L1027.3 905M1032.6 897L1031.9 905M1035 897L1034.3 905M1039.6 897L1038.9 905M1042 897L1041.3 905M1046.6 897L1045.9 905M1049 897L1048.3 905M1053.6 897L1052.9 905M1056 897L1055.3 905M1060.6 897L1059.9 905M1063 897L1062.3 905M1067.6 897L1066.9 905M1070 897L1069.3 905M1074.6 897L1073.9 905M1077 897L1076.3 905M1081.6 897L1080.9 905M1084 897L1083.3 905M1088.6 897L1087.9 905M1091 897L1090.3 905M1095.6 897L1094.9 905M1098 897L1097.3 905M1102.6 897L1101.9 905M1105 897L1104.3 905M1109.6 897L1108.9 905M1112 897L1111.3 905M1116.6 897L1115.9 905M1119 897L1118.3 905M1123.6 897L1122.9 905M1126 897L1125.3 905M1130.6 897L1129.9 905M1133 897L1132.3 905M1137.6 897L1136.9 905M1140 897L1139.3 905M1144.6 897L1143.9 905M1147 897L1146.3 905M1151.6 897L1150.9 905M1154 897L1153.3 905M1158.6 897L1157.9 905M1161 897L1160.3 905M1165.6 897L1164.9 905M1168 897L1167.3 905M1172.6 897L1171.9 905M1175 897L1174.3 905M1179.6 897L1178.9 905M1182 897L1181.3 905M1186.6 897L1185.9 905M1189 897L1188.3 905M1193.6 897L1192.9 905M1196 897L1195.3 905M1200.6 897L1199.9 905M1203 897L1202.3 905M1207.6 897L1206.9 905M1210 897L1209.3 905M1214.6 897L1213.9 905M1217 897L1216.3 905M1221.6 897L1220.9 905M1224 897L1223.3 905M1228.6 897L1227.9 905M1231 897L1230.3 905M1235.6 897L1234.9 905M1238 897L1237.3 905M1242.6 897L1241.9 905M1245 897L1244.3 905M1249.6 897L1248.9 905M1252 897L1251.3 905M1256.6 897L1255.9 905M1259 897L1258.3 905M1263.6 897L1262.9 905M1266 897L1265.3 905M1270.6 897L1269.9 905M1273 897L1272.3 905M1277.6 897L1276.9 905M1280 897L1279.3 905M1284.6 897L1283.9 905M1287 897L1286.3 905M1291.6 897L1290.9 905M1294 897L1293.3 905M1298.6 897L1297.9 905M1301 897L1300.3 905M1305.6 897L1304.9 905M1308 897L1307.3 905M1312.6 897L1311.9 905M1315 897L1314.3 905M1319.6 897L1318.9 905M1322 897L1321.3 905M1326.6 897L1325.9 905M1329 897L1328.3 905M1333.6 897L1332.9 905M1336 897L1335.3 905M1340.6 897L1339.9 905M1343 897L1342.3 905M1347.6 897L1346.9 905M1350 897L1349.3 905M1354.6 897L1353.9 905M1357 897L1356.3 905M1361.6 897L1360.9 905M1364 897L1363.3 905M1368.6 897L1367.9 905M1371 897L1370.3 905M1375.6 897L1374.9 905M1378 897L1377.3 905M1382.6 897L1381.9 905M1385 897L1384.3 905M1389.6 897L1388.9 905M1392 897L1391.3 905M1396.6 897L1395.9 905M1399 897L1398.3 905M1403.6 897L1402.9 905M1406 897L1405.3 905M1410.6 897L1409.9 905M1413 897L1412.3 905M1417.6 897L1416.9 905M1420 897L1419.3 905M1424.6 897L1423.9 905M1427 897L1426.3 905M1431.6 897L1430.9 905M1434 897L1433.3 905" stroke="#c6cad2" stroke-width="1.05" fill="none"/><rect x="8" y="899.1" width="1428" height="1.1" fill="#c6cad2"/><rect x="8" y="902" width="1428" height="1.1" fill="#c6cad2"/></svg></div>
</body></html>
